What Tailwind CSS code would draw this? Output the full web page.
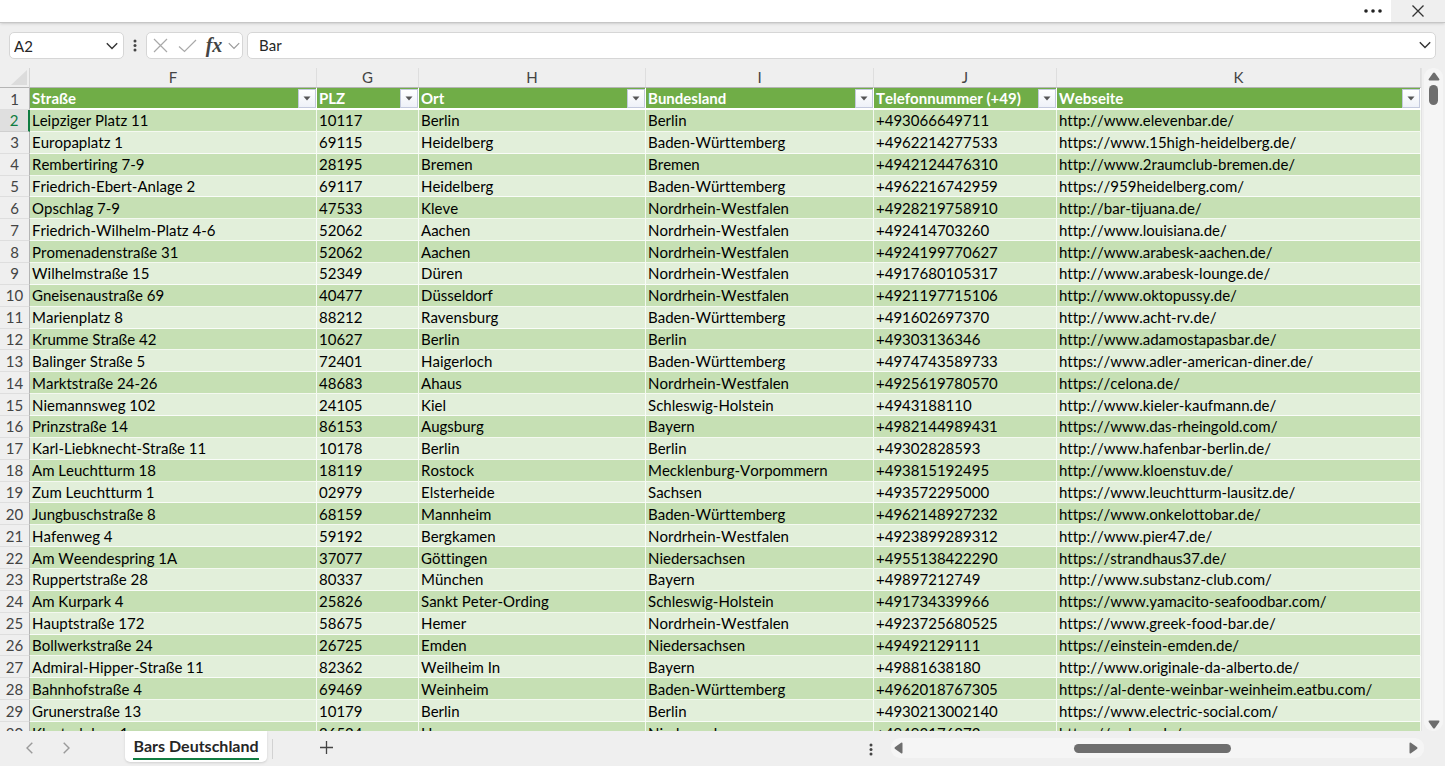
<!DOCTYPE html>
<html lang="de">
<head>
<meta charset="utf-8">
<title>Bars Deutschland</title>
<script src="https://cdn.jsdelivr.net/npm/@tailwindcss/browser@4"></script>
</head>
<body class="flex h-screen flex-col overflow-hidden bg-[#efefef] font-[Lato,'Open_Sans',sans-serif] text-[15px] text-[#262626] [font-kerning:none] [font-variant-ligatures:none]">
<header class="z-10 flex h-[23px] shrink-0 justify-end border-b border-[#c6c6c6] bg-white shadow-sm">
  <button aria-label="Mehr" class="flex w-9 items-center justify-center"><svg width="20" height="6" viewBox="0 0 20 6" fill="#222"><circle cx="3" cy="3" r="1.8"/><circle cx="10" cy="3" r="1.8"/><circle cx="17" cy="3" r="1.8"/></svg></button>
  <button aria-label="Schließen" class="flex w-[54px] items-center justify-center bg-[#efefef]"><svg width="12" height="12" viewBox="0 0 12 12" fill="none" stroke="#333" stroke-width="1.3"><path d="M.5.5l11 11M11.5.5l-11 11"/></svg></button>
</header>

<section aria-label="Bearbeitungsleiste" class="flex h-[45px] shrink-0 items-center px-[9px]">
  <div class="flex h-[27px] w-[115px] items-center rounded-[5px] border border-[#d6d6d6] bg-white pr-1">
    <input aria-label="Namenfeld" value="A2" class="h-full w-0 grow pl-1 outline-none">
    <button aria-label="Namen anzeigen" class="p-px"><svg width="12" height="8" viewBox="0 0 12 8" fill="none" stroke="#333" stroke-width="1.4"><path d="M.8 1.2L6 6.4l5.2-5.2"/></svg></button>
  </div>
  <svg class="mx-[9px] shrink-0" width="4" height="13" viewBox="0 0 4 13" fill="#444"><circle cx="2" cy="2" r="1.5"/><circle cx="2" cy="6.5" r="1.5"/><circle cx="2" cy="11" r="1.5"/></svg>
  <div class="flex h-[27px] w-[97px] shrink-0 items-center rounded-[5px] border border-[#d6d6d6] bg-white pl-1.5">
    <button aria-label="Abbrechen"><svg width="15" height="15" viewBox="0 0 15 15" fill="none" stroke="#a9a9a9" stroke-width="1.2"><path d="M1 1l13 13M14 1L1 14"/></svg></button>
    <button aria-label="Eingeben" class="ml-2.5"><svg width="19" height="14" viewBox="0 0 19 14" fill="none" stroke="#a9a9a9" stroke-width="1.2"><path d="M1 7.5l5.5 5L18 1"/></svg></button>
    <button aria-label="Funktion einfügen" class="ml-2 w-[18px] pb-0.5 font-['Liberation_Serif',serif] text-xl leading-5 font-bold text-[#444] italic">fx</button>
    <button aria-label="Funktionsliste" class="ml-[5px]"><svg width="12" height="8" viewBox="0 0 12 8" fill="none" stroke="#999" stroke-width="1.2"><path d="M.8 1.2L6 6.4l5.2-5.2"/></svg></button>
  </div>
  <div class="ml-1 flex h-[27px] grow items-center rounded-[5px] border border-[#d6d6d6] bg-white pr-1">
    <input aria-label="Zellinhalt" value="Bar" class="h-full w-0 grow pb-0.5 pl-[11px] outline-none">
    <button aria-label="Leiste erweitern" class="pb-0.5"><svg width="12" height="8" viewBox="0 0 12 8" fill="none" stroke="#333" stroke-width="1.4"><path d="M.8 1.2L6 6.4l5.2-5.2"/></svg></button>
  </div>
</section>

<main class="flex min-h-0 grow">
  <div class="min-w-0 grow overflow-hidden">
    <table class="h-[676px] w-full table-fixed border-separate border-spacing-0 leading-5 whitespace-nowrap text-black">
      <colgroup><col class="w-[30px]"><col class="w-[287px]"><col class="w-[102px]"><col class="w-[227px]"><col class="w-[228px]"><col class="w-[183px]"><col></colgroup>
      <thead id="head"></thead>
      <tbody id="rows"></tbody>
    </table>
  </div>
  <div class="flex w-6 shrink-0 flex-col items-center border-l border-[#e2e2e2] px-0.5">
    <div class="flex w-full grow flex-col items-center rounded-[9px] bg-[#f5f5f5] pt-1 pb-0.5">
      <button aria-label="Nach oben"><svg width="12" height="9" viewBox="0 0 12 9" fill="#6e6e6e"><path d="M6 .5q.6 0 1 .6l4.3 6q.6 1.4-.8 1.4h-9q-1.4 0-.8-1.4l4.3-6q.4-.6 1-.6z"/></svg></button>
      <div class="mt-1 h-5 w-[9px] rounded-full bg-[#6e6e6e]"></div>
      <button aria-label="Nach unten" class="mt-auto"><svg width="12" height="9" viewBox="0 0 12 9" fill="#6e6e6e"><path d="M6 8.5q-.6 0-1-.6l-4.3-6Q.1.5 1.5.5h9q1.4 0 .8 1.4l-4.3 6q-.4.6-1 .6z"/></svg></button>
    </div>
  </div>
</main>

<footer class="flex h-[35px] shrink-0 items-start">
  <button aria-label="Vorheriges Blatt" class="mt-[11px] ml-[26px]"><svg width="7" height="12" viewBox="0 0 7 12" fill="none" stroke="#9a9a9a" stroke-width="1.4"><path d="M6.3.8L1 6l5.3 5.2"/></svg></button>
  <button aria-label="Nächstes Blatt" class="mt-[11px] ml-[30px]"><svg width="7" height="12" viewBox="0 0 7 12" fill="none" stroke="#9a9a9a" stroke-width="1.4"><path d="M.7.8L6 6 .7 11.2"/></svg></button>
  <button class="ml-[55px] h-[31px] w-[142px] rounded-b-[5px] bg-white shadow-sm"><span class="inline-block border-b-2 border-[#107c41] text-base leading-6 font-bold">Bars Deutschland</span></button>
  <div class="mt-2 ml-[5px] h-5 w-px bg-[#d2d2d2]"></div>
  <button aria-label="Neues Blatt" class="mt-2.5 ml-[47px]"><svg width="13" height="13" viewBox="0 0 13 13" fill="none" stroke="#444" stroke-width="1.3"><path d="M6.5 0v13M0 6.5h13"/></svg></button>
  <svg class="mt-3 ml-auto" width="4" height="13" viewBox="0 0 4 13" fill="#444"><circle cx="2" cy="2" r="1.5"/><circle cx="2" cy="6.5" r="1.5"/><circle cx="2" cy="11" r="1.5"/></svg>
  <div class="mt-[7px] mr-[21px] ml-[18px] flex h-5 w-[533px] items-center rounded-[9px] bg-[#f5f5f5] pr-1.5 pl-[3px]">
    <button aria-label="Nach links"><svg width="9" height="12" viewBox="0 0 9 12" fill="#6e6e6e"><path d="M.5 6q0-.6.6-1l6-4.300Q8.500.1 8.500 1.500v9q0 1.400-1.400.8l-6-4.300q-.6-.4-.6-1z"/></svg></button>
    <div class="ml-[171px] h-[9px] w-[157px] rounded-full bg-[#6e6e6e]"></div>
    <button aria-label="Nach rechts" class="ml-auto"><svg width="9" height="12" viewBox="0 0 9 12" fill="#6e6e6e"><path d="M8.500 6q0-.6-.6-1l-6-4.300Q.5.100.5 1.500v9q0 1.400 1.400.8l6-4.300q.6-.4.600-1z"/></svg></button>
  </div>
</footer>

<script>
const columns = [["F","Straße"],["G","PLZ"],["H","Ort"],["I","Bundesland"],["J","Telefonnummer (+49)"],["K","Webseite"]];
const data = `Leipziger Platz 11|10117|Berlin|Berlin|+493066649711|http://www.elevenbar.de/
Europaplatz 1|69115|Heidelberg|Baden-Württemberg|+4962214277533|https://www.15high-heidelberg.de/
Rembertiring 7-9|28195|Bremen|Bremen|+4942124476310|http://www.2raumclub-bremen.de/
Friedrich-Ebert-Anlage 2|69117|Heidelberg|Baden-Württemberg|+4962216742959|https://959heidelberg.com/
Opschlag 7-9|47533|Kleve|Nordrhein-Westfalen|+4928219758910|http://bar-tijuana.de/
Friedrich-Wilhelm-Platz 4-6|52062|Aachen|Nordrhein-Westfalen|+492414703260|http://www.louisiana.de/
Promenadenstraße 31|52062|Aachen|Nordrhein-Westfalen|+4924199770627|http://www.arabesk-aachen.de/
Wilhelmstraße 15|52349|Düren|Nordrhein-Westfalen|+4917680105317|http://www.arabesk-lounge.de/
Gneisenaustraße 69|40477|Düsseldorf|Nordrhein-Westfalen|+4921197715106|http://www.oktopussy.de/
Marienplatz 8|88212|Ravensburg|Baden-Württemberg|+491602697370|http://www.acht-rv.de/
Krumme Straße 42|10627|Berlin|Berlin|+49303136346|http://www.adamostapasbar.de/
Balinger Straße 5|72401|Haigerloch|Baden-Württemberg|+4974743589733|https://www.adler-american-diner.de/
Marktstraße 24-26|48683|Ahaus|Nordrhein-Westfalen|+4925619780570|https://celona.de/
Niemannsweg 102|24105|Kiel|Schleswig-Holstein|+4943188110|http://www.kieler-kaufmann.de/
Prinzstraße 14|86153|Augsburg|Bayern|+4982144989431|https://www.das-rheingold.com/
Karl-Liebknecht-Straße 11|10178|Berlin|Berlin|+49302828593|http://www.hafenbar-berlin.de/
Am Leuchtturm 18|18119|Rostock|Mecklenburg-Vorpommern|+493815192495|http://www.kloenstuv.de/
Zum Leuchtturm 1|02979|Elsterheide|Sachsen|+493572295000|https://www.leuchtturm-lausitz.de/
Jungbuschstraße 8|68159|Mannheim|Baden-Württemberg|+4962148927232|https://www.onkelottobar.de/
Hafenweg 4|59192|Bergkamen|Nordrhein-Westfalen|+4923899289312|http://www.pier47.de/
Am Weendespring 1A|37077|Göttingen|Niedersachsen|+4955138422290|https://strandhaus37.de/
Ruppertstraße 28|80337|München|Bayern|+49897212749|http://www.substanz-club.com/
Am Kurpark 4|25826|Sankt Peter-Ording|Schleswig-Holstein|+491734339966|https://www.yamacito-seafoodbar.com/
Hauptstraße 172|58675|Hemer|Nordrhein-Westfalen|+4923725680525|https://www.greek-food-bar.de/
Bollwerkstraße 24|26725|Emden|Niedersachsen|+49492129111|https://einstein-emden.de/
Admiral-Hipper-Straße 11|82362|Weilheim In|Bayern|+49881638180|http://www.originale-da-alberto.de/
Bahnhofstraße 4|69469|Weinheim|Baden-Württemberg|+4962018767305|https://al-dente-weinbar-weinheim.eatbu.com/
Grunerstraße 13|10179|Berlin|Berlin|+4930213002140|https://www.electric-social.com/
Klosterlohne 1|26524|Hage|Niedersachsen|+49493176272|https://radons.de/`.split("\n").map(line => line.split("|"));

const filterButton = name => `<button aria-label="${name} filtern" class="flex h-[19px] w-[18px] shrink-0 items-center justify-center border border-[#c3c9dd] bg-linear-to-b from-white to-[#eef1f8]"><svg width="8" height="5" viewBox="0 0 8 5" fill="#555"><path d="M.5.5h7L4 4.5z"/></svg></button>`;

document.getElementById("head").innerHTML =
  `<tr><td class="border-r border-b border-[#b5b5b5] border-r-[#d5d5d5] p-0"><svg class="ml-auto" width="18" height="16" viewBox="0 0 18 16" fill="#dcdcdc"><path d="M16 0v15H0z"/></svg></td>`
  + columns.map(([letter]) => `<th scope="col" class="border-r border-b border-[#b5b5b5] border-r-[#dedede] p-0 pb-px text-center leading-[18px] font-normal text-[#444]">${letter}</th>`).join("")
  + `</tr><tr><th scope="row" class="border-r border-b border-[#dedede] border-r-[#b5b5b5] p-0 text-center font-normal text-[#444]">1</th>`
  + columns.map(([, name]) => `<th scope="col" class="border-r border-b-2 border-white bg-[#70ad47] p-0 text-left font-bold text-white"><div class="flex items-center justify-between pl-0.5"><span>${name}</span>${filterButton(name)}</div></th>`).join("")
  + `</tr>`;

document.getElementById("rows").innerHTML = data.map((cells, i) => {
  const number = i === 0
    ? `<th scope="row" class="border-r-2 border-b border-[#cfcfcf] border-r-[#107c41] bg-[#dfdfdf] p-0 text-center font-normal text-[#107c41]">2</th>`
    : `<th scope="row" class="border-r border-b border-[#dedede] border-r-[#b5b5b5] bg-[#efefef] p-0 text-center font-normal text-[#444]">${i + 2}</th>`;
  const fill = i % 2 ? "bg-[#e2efda]" : "bg-[#c6e0b4]";
  return `<tr class="${fill}">` + number
    + cells.map(text => `<td class="border-r border-b border-white/80 p-0 pl-0.5">${text}</td>`).join("") + `</tr>`;
}).join("");
</script>
</body>
</html>
